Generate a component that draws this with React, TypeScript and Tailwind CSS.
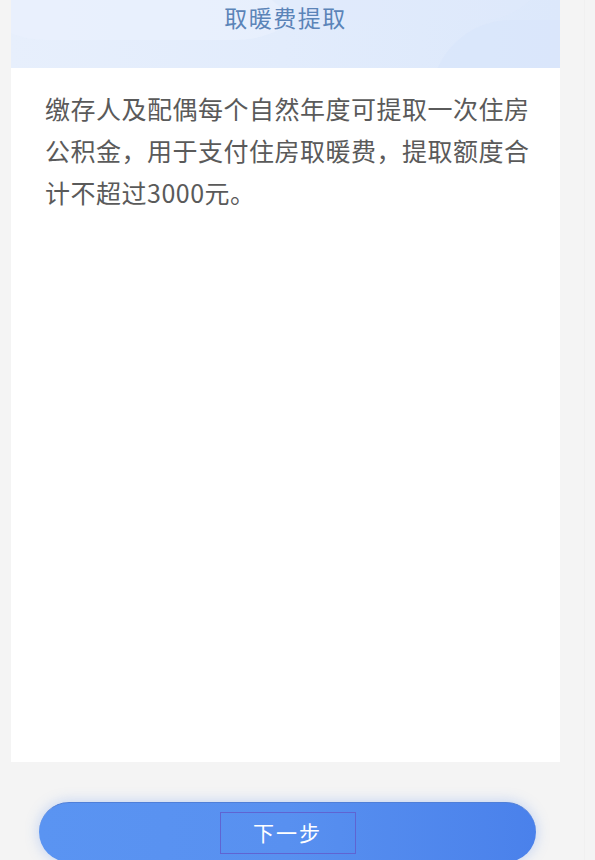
import React from "react";

export default function App() {
  const font = { fontFamily: '"Noto Sans CJK SC", "Noto Sans", sans-serif' };
  return (
    <div className="w-[595px] h-[860px] bg-[#f4f4f4] overflow-hidden flex flex-col relative" style={font}>
      <div className="ml-[11px] w-[549px] h-[762px] bg-white flex flex-col shrink-0">
        <div className="relative h-[68px] overflow-hidden bg-gradient-to-r from-[#e7effc] via-[#e2ecfc] to-[#dce8fb] flex justify-center">
          <div className="absolute left-[-60px] top-[-150px] w-[380px] h-[190px] rounded-full bg-[#eaf1fd] opacity-70" />
          <div className="absolute left-[420px] top-[20px] w-[260px] h-[160px] rounded-full bg-[#d9e6fb] opacity-70" />
          <div className="absolute left-[240px] top-[-120px] w-[300px] h-[140px] rounded-full bg-[#e0eafc] opacity-60" />
          <span className="relative pt-[3px] text-[23px] leading-[28px] tracking-[1.5px] text-[#5b84b8]">取暖费提取</span>
        </div>
        <p className="pl-[34px] pr-[20px] pt-[19px] text-[25px] leading-[42px] tracking-[0.5px] text-[#5a5a5a]">
          缴存人及配偶每个自然年度可提取一次住房公积金，用于支付住房取暖费，提取额度合计不超过3000元。
        </p>
      </div>
      <div className="mt-[40px] ml-[39px] w-[497px] h-[60px] shrink-0 rounded-full bg-gradient-to-r from-[#5a94f2] via-[#5890f0] to-[#4a81eb] shadow-[0_0_14px_rgba(90,140,240,0.35)] border-t border-[#4f7fd8] flex justify-center pt-[9px]">
        <span className="w-[136px] h-[42px] border border-[#5f64d2] flex items-center justify-center text-white text-[21px] tracking-[2px]">
          下一步
        </span>
      </div>
      <div className="absolute right-[10px] top-0 w-px h-full bg-[#f0f0f0]" />
    </div>
  );
}
